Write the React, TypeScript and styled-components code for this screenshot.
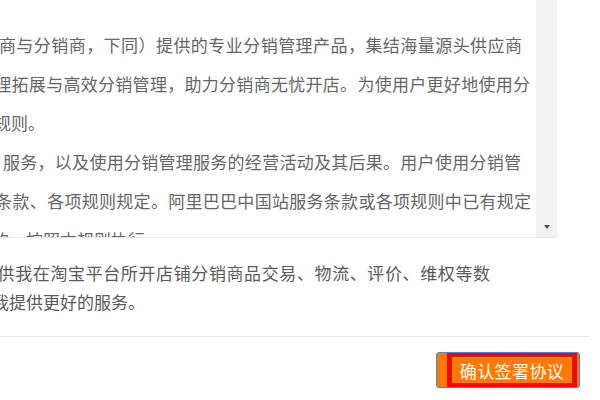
import React from 'react';
import styled, { createGlobalStyle } from 'styled-components';

const GlobalStyle = createGlobalStyle`
  html, body {
    margin: 0;
    padding: 0;
    background: #fff;
  }

  body {
    width: 600px;
    height: 400px;
    overflow: hidden;
    font-family: "Noto Sans CJK SC", "Noto Sans", sans-serif;
  }
`;

const Dialog = styled.div`
  width: 590px;
  display: flex;
  flex-direction: column;
`;

const ScrollBox = styled.div`
  display: flex;
  width: 557px;
  height: 237px;
  border-bottom: 1px solid #e6e6e6;
`;

const ScrollText = styled.div`
  flex: 1;
  min-width: 0;
  overflow: hidden;
  padding-top: 25px;
  color: #666;
  font-size: 17px;
  line-height: 39px;
`;

// one rendered line; a line with a set end is spread to reach it
const Line = styled.div<{ $indent: number; $end?: number }>`
  text-indent: ${(p) => p.$indent}px;
  width: ${(p) => (p.$end ? `${p.$end}px` : 'auto')};
  white-space: nowrap;
  text-align: ${(p) => (p.$end ? 'justify' : 'left')};
  text-align-last: ${(p) => (p.$end ? 'justify' : 'auto')};
  text-justify: inter-character;
`;

const Track = styled.div`
  width: 21px;
  flex: none;
  background: #f1f1f1;
  display: flex;
  flex-direction: column;
  justify-content: flex-end;
`;

const ArrowDown = styled.div`
  height: 20px;
  display: flex;
  align-items: center;
  justify-content: center;

  &::after {
    content: '';
    border-left: 3.5px solid transparent;
    border-right: 3.5px solid transparent;
    border-top: 4px solid #505050;
  }
`;

const Agreement = styled.div`
  padding: 20px 0;
  color: #5a5a5a;
  font-size: 17px;
  line-height: 29px;
`;

const Footer = styled.div`
  border-top: 1px solid #e8e8e8;
  padding: 15px 10px 0 0;
  display: flex;
  justify-content: flex-end;
`;

const ConfirmButton = styled.button`
  display: flex;
  align-items: center;
  height: 36px;
  width: 144px;
  box-sizing: border-box;
  padding: 0 2px 0 10px;
  border: 1px solid #3f86e6;
  border-radius: 3px;
  background: #ff7800;
  cursor: pointer;
`;

const ButtonLabel = styled.span`
  display: flex;
  align-items: center;
  justify-content: center;
  flex: 1;
  height: 34px;
  box-sizing: border-box;
  border: 4px solid #ff0000;
  border-top-width: 3px;
  border-bottom-width: 3px;
  box-shadow: inset 0 0 0 1px #9a3a00;
  color: #fff;
  font-family: "Noto Sans CJK SC", sans-serif;
  font-size: 17px;
  letter-spacing: 0.4px;
`;

type TextLine = { text: string; indent: number; end?: number };

const ruleLines: TextLine[] = [
  { text: '供应商与分销商，下同）提供的专业分销管理产品，集结海量源头供应商', indent: -36, end: 522 },
  { text: '管理拓展与高效分销管理，助力分销商无忧开店。为使用户更好地使用分', indent: -23, end: 530 },
  { text: '本规则。', indent: -23 },
  { text: '服务，以及使用分销管理服务的经营活动及其后果。用户使用分销管', indent: 3, end: 521 },
  { text: '务条款、各项规则规定。阿里巴巴中国站服务条款或各项规则中已有规定', indent: -22, end: 531 },
  { text: '定的，按照本规则执行。', indent: -25 },
];

const agreementLines: TextLine[] = [
  { text: '提供我在淘宝平台所开店铺分销商品交易、物流、评价、维权等数', indent: -20, end: 490 },
  { text: '为我提供更好的服务。', indent: -25 },
];

export default function App() {
  return (
    <>
      <GlobalStyle />
      <Dialog>
        <ScrollBox>
          <ScrollText>
            {ruleLines.map((l) => (
              <Line key={l.text} $indent={l.indent} $end={l.end}>
                {l.text}
              </Line>
            ))}
          </ScrollText>
          <Track>
            <ArrowDown />
          </Track>
        </ScrollBox>
        <Agreement>
          {agreementLines.map((l) => (
            <Line key={l.text} $indent={l.indent} $end={l.end}>
              {l.text}
            </Line>
          ))}
        </Agreement>
        <Footer>
          <ConfirmButton type="button">
            <ButtonLabel>确认签署协议</ButtonLabel>
          </ConfirmButton>
        </Footer>
      </Dialog>
    </>
  );
}
